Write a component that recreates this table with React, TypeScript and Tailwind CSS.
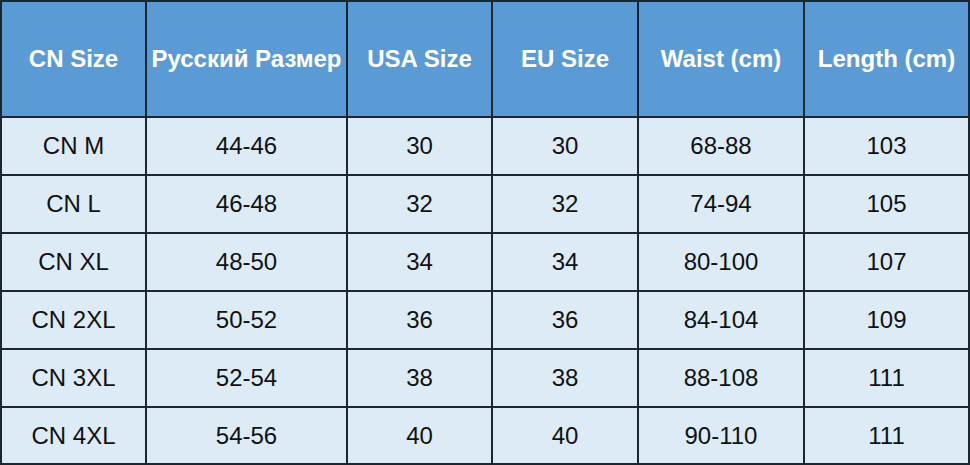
import React from "react";

const headers = ["CN Size", "Русский Размер", "USA Size", "EU Size", "Waist (cm)", "Length (cm)"];
const rows = [
  ["CN M", "44-46", "30", "30", "68-88", "103"],
  ["CN L", "46-48", "32", "32", "74-94", "105"],
  ["CN XL", "48-50", "34", "34", "80-100", "107"],
  ["CN 2XL", "50-52", "36", "36", "84-104", "109"],
  ["CN 3XL", "52-54", "38", "38", "88-108", "111"],
  ["CN 4XL", "54-56", "40", "40", "90-110", "111"],
];

export default function App() {
  return (
    <div
      className="w-[970px] h-[465px] bg-[#1b2631] p-[2px] overflow-hidden"
      style={{ fontFamily: '"Liberation Sans", Arial, sans-serif' }}
    >
      <div className="grid grid-cols-[143px_199px_143px_144px_164px_163px] grid-rows-[114px_56px_56px_56px_56px_56px_55px] gap-[2px]">
        {headers.map((h) => (
          <div
            key={h}
            className="bg-[#5b9bd5] flex items-center justify-center text-white font-bold text-[24px] whitespace-nowrap"
          >
            {h}
          </div>
        ))}
        {rows.map((r, i) =>
          r.map((c, j) => (
            <div
              key={i + "-" + j}
              className="bg-[#ddebf7] flex items-center justify-center text-[#111] text-[24px]"
            >
              {c}
            </div>
          ))
        )}
      </div>
    </div>
  );
}
